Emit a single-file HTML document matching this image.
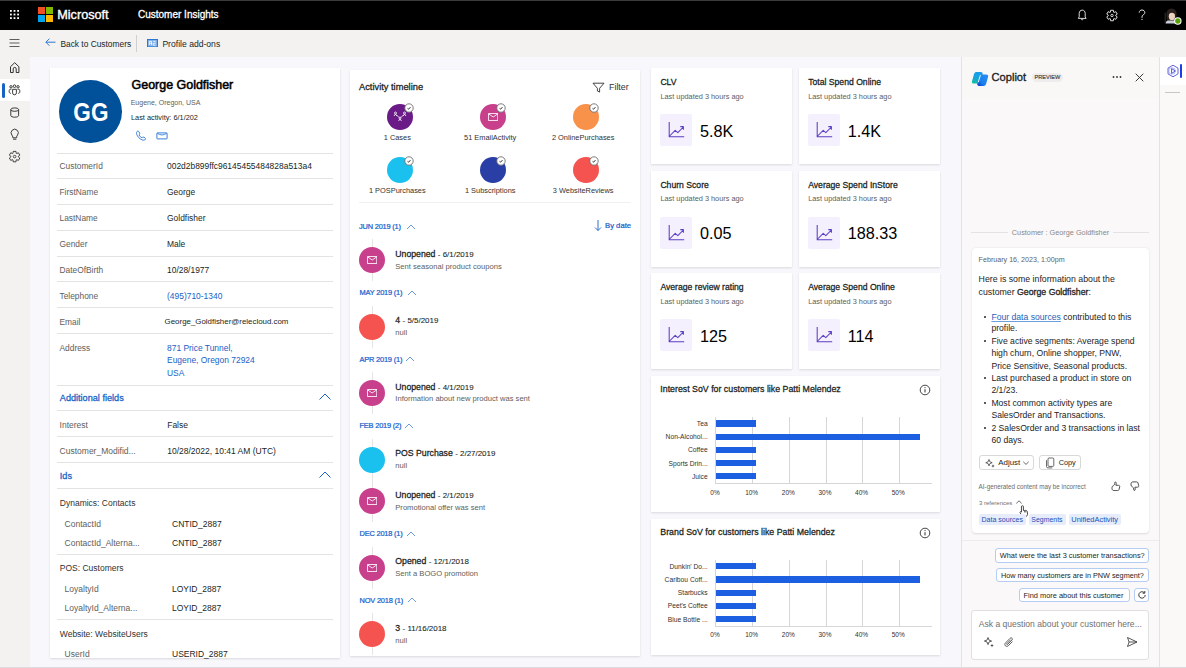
<!DOCTYPE html><html><head><meta charset="utf-8"><style>
html,body{margin:0;padding:0;width:1186px;height:668px;overflow:hidden;background:#f8f7fb;font-family:"Liberation Sans",sans-serif;}
.t{position:absolute;white-space:nowrap;line-height:1;}
.b{position:absolute;box-sizing:border-box;}
</style></head><body>
<div class="b" style="left:0px;top:0px;width:1186px;height:30px;background:#000;"></div>
<div class="b" style="left:0px;top:0px;width:1186px;height:1px;background:#3a3a3a;"></div>
<div class="b" style="left:0px;top:30px;width:30px;height:638px;background:#f4f1f1;"></div>
<div class="b" style="left:30px;top:30px;width:1156px;height:27px;background:#f4f2f1;"></div>
<div class="b" style="left:30px;top:57px;width:931px;height:611px;background:#f8f7fc;"></div>
<div class="b" style="left:961px;top:57px;width:199px;height:611px;background:#faf8f8;border-left:1px solid #e4e2e2;border-right:1px solid #e4e2e2;"></div>
<div class="b" style="left:1160px;top:57px;width:26px;height:611px;background:#fbf8f8;"></div>
<div class="b" style="left:1160px;top:57px;width:26px;height:28px;background:#fff;"></div>
<div class="b" style="left:962px;top:57px;width:197px;height:40.5px;background:#faf7f7;"></div>
<div class="b" style="left:1165px;top:92px;width:15px;height:1px;background:#c8c6c6;"></div>
<div class="b" style="left:0px;top:666.5px;width:1186px;height:1.5px;background:#dddbdd;"></div>
<svg class="b" style="left:0px;top:0px" width="30" height="30" viewBox="0 0 30 30" fill="none"><rect x="10.0" y="10.0" width="1.8" height="1.8" fill="#fff"/><rect x="10.0" y="13.6" width="1.8" height="1.8" fill="#fff"/><rect x="10.0" y="17.2" width="1.8" height="1.8" fill="#fff"/><rect x="13.6" y="10.0" width="1.8" height="1.8" fill="#fff"/><rect x="13.6" y="13.6" width="1.8" height="1.8" fill="#fff"/><rect x="13.6" y="17.2" width="1.8" height="1.8" fill="#fff"/><rect x="17.2" y="10.0" width="1.8" height="1.8" fill="#fff"/><rect x="17.2" y="13.6" width="1.8" height="1.8" fill="#fff"/><rect x="17.2" y="17.2" width="1.8" height="1.8" fill="#fff"/></svg>
<div class="b" style="left:38px;top:7px;width:7px;height:7px;background:#f25022;"></div>
<div class="b" style="left:46px;top:7px;width:7px;height:7px;background:#7fba00;"></div>
<div class="b" style="left:38px;top:15px;width:7px;height:7px;background:#00a4ef;"></div>
<div class="b" style="left:46px;top:15px;width:7px;height:7px;background:#ffb900;"></div>
<div class="t" style="left:57.20px;top:8.64px;font-size:12.7px;font-weight:400;color:#fff;-webkit-text-stroke:0.38px #fff;">Microsoft</div>
<div class="t" style="left:138.00px;top:10.10px;font-size:10.0px;font-weight:400;color:#fff;-webkit-text-stroke:0.30px #fff;">Customer Insights</div>
<svg class="b" style="left:1076px;top:9px" width="12" height="12" viewBox="0 0 12 12" fill="none"><path d="M6.2 1.1c-1.8 0-3 1.4-3 3.3v3.4l-.9 1.6h7.8l-.9-1.6V4.4c0-1.9-1.2-3.3-3-3.3z" stroke="#fff" stroke-width="0.85" stroke-linejoin="round"/><path d="M5.2 10.2c.2.4.5.6 1 .6s.8-.2 1-.6" stroke="#fff" stroke-width="0.85"/></svg>
<svg class="b" style="left:1106px;top:9px" width="12" height="13" viewBox="0 0 12 13" fill="none"><circle cx="6" cy="6.5" r="1.2" stroke="#fff" stroke-width="0.8"/><path d="M9.69 6.79 L11.22 7.90 L9.82 10.32 L8.10 9.55 L7.59 9.84 L7.40 11.72 L4.60 11.72 L4.41 9.84 L3.90 9.55 L2.18 10.32 L0.78 7.90 L2.31 6.79 L2.31 6.21 L0.78 5.10 L2.18 2.68 L3.90 3.45 L4.41 3.16 L4.60 1.28 L7.40 1.28 L7.59 3.16 L8.10 3.45 L9.82 2.68 L11.22 5.10 L9.69 6.21Z" stroke="#fff" stroke-width="0.85" stroke-linejoin="round"/></svg>
<svg class="b" style="left:1137px;top:9px" width="10" height="12" viewBox="0 0 10 12" fill="none"><path d="M2.2 3.6c0-1.6 1.3-2.6 2.8-2.6s2.8 1 2.8 2.5c0 1.2-.7 1.8-1.6 2.4-.8.5-1.2 1-1.2 2v.9" stroke="#fff" stroke-width="0.9"/><circle cx="5" cy="10.3" r="0.6" fill="#fff"/></svg>
<svg class="b" style="left:1160px;top:4px" width="24" height="24" viewBox="0 0 24 24" fill="none"><path d="M5.5 19.5c.5-2.5 2.5-4 6-4.2 3.5.2 5.5 1.7 6 4.2z" fill="#c9ced8"/><path d="M6.5 12c-.5-4.5 1.5-7.5 5-7.5 3.6 0 5.6 3 5 7.5l-.6 4.5H7.2z" fill="#2b211d"/><ellipse cx="11.9" cy="12.2" rx="3.1" ry="3.9" fill="#ecd2bf"/><path d="M8.2 9.5c1.5-1.8 4.5-2.3 6.8-.3" stroke="#2b211d" stroke-width="1.6"/><path d="M5.2 8.5v10.5" stroke="#3a3a3a" stroke-width="0.8"/><circle cx="17.8" cy="17" r="3.2" fill="#57a300" stroke="#fff" stroke-width="1.1"/></svg>
<svg class="b" style="left:45px;top:37.5px" width="11" height="9" viewBox="0 0 11 9" fill="none"><path d="M0.9 4.2h9.6M4.4 0.7L0.9 4.2l3.5 3.5" stroke="#2b78d4" stroke-width="1"/></svg>
<div class="t" style="left:60.40px;top:39.96px;font-size:8.4px;font-weight:400;color:#201f1e;">Back to Customers</div>
<div class="b" style="left:136px;top:35px;width:1px;height:17px;background:#d2d0ce;"></div>
<svg class="b" style="left:146.5px;top:38.8px" width="11" height="8.4" viewBox="0 0 11 8.4" fill="none"><rect x="0.5" y="0.5" width="10" height="7.4" fill="#7fb0ea" stroke="#2b78d4" stroke-width="1"/><path d="M2.3 6.2V2.4h2.2v3.8M2.3 4.3h2.2M6.2 2.4h2.4M8.6 4.3H6.2v1.9h2.4" stroke="#fff" stroke-width="0.8"/></svg>
<div class="t" style="left:162.40px;top:40.16px;font-size:8.6px;font-weight:400;color:#201f1e;">Profile add-ons</div>
<svg class="b" style="left:0px;top:30px" width="30" height="140" viewBox="0 0 30 140" fill="none">
<path d="M9.5 9.5h10M9.5 13h10M9.5 16.5h10" stroke="#605e5c" stroke-width="1"/>
<path d="M10.5 42.5v-5.8l4.2-4 4.2 4v5.8h-2.7v-3.6a1.5 1.5 0 0 0-3 0v3.6z" stroke="#323130" stroke-width="1" stroke-linejoin="round"/>
</svg>
<div class="b" style="left:0px;top:79px;width:30px;height:22px;background:#fff;"></div>
<div class="b" style="left:2px;top:83px;width:2.5px;height:15px;background:#1862c6;border-radius:1.5px;"></div>
<svg class="b" style="left:0px;top:79px" width="30" height="22" viewBox="0 0 30 22" fill="none"><g stroke="#323130" stroke-width="0.95" fill="none"><circle cx="11" cy="7.8" r="1.2"/><circle cx="14.5" cy="7.2" r="1.3"/><circle cx="18" cy="7.8" r="1.2"/><path d="M12.6 10.3h3.8v3.6a1.9 1.9 0 0 1-3.8 0z"/><path d="M11.4 10.3h-1c-.7 0-1.2.5-1.2 1.2v1.3c0 .9.7 1.6 1.7 1.6M17.6 10.3h1c.7 0 1.2.5 1.2 1.2v1.3c0 .9-.7 1.6-1.7 1.6"/></g></svg>
<svg class="b" style="left:0px;top:100px" width="30" height="70" viewBox="0 0 30 70" fill="none">
<ellipse cx="14.7" cy="9.6" rx="3.9" ry="1.7" stroke="#323130" stroke-width="0.95"/><path d="M10.8 9.6v6c0 .9 1.8 1.6 3.9 1.6s3.9-.7 3.9-1.6v-6" stroke="#323130" stroke-width="0.95"/>
<path d="M12.8 37.2c0-.9-.4-1.4-.9-2.1a3.6 3.6 0 1 1 5.6 0c-.5.7-.9 1.2-.9 2.1v.6h-3.8zM13.1 39.2h3.2" stroke="#323130" stroke-width="0.95" stroke-linejoin="round"/>
<circle cx="14.6" cy="56.6" r="1.3" stroke="#323130" stroke-width="0.85"/><path d="M18.29 56.89 L19.82 58.00 L18.42 60.42 L16.70 59.65 L16.19 59.94 L16.00 61.82 L13.20 61.82 L13.01 59.94 L12.50 59.65 L10.78 60.42 L9.38 58.00 L10.91 56.89 L10.91 56.31 L9.38 55.20 L10.78 52.78 L12.50 53.55 L13.01 53.26 L13.20 51.38 L16.00 51.38 L16.19 53.26 L16.70 53.55 L18.42 52.78 L19.82 55.20 L18.29 56.31Z" stroke="#323130" stroke-width="0.9" stroke-linejoin="round"/>
</svg>
<div class="b" style="left:50px;top:68px;width:290px;height:590px;background:#fff;box-shadow:0 0.5px 2px rgba(0,0,0,0.12);"></div>
<div class="b" style="left:59px;top:79.5px;width:63px;height:63px;border-radius:50%;background:#01509a;"></div>
<div class="t" style="left:-109.50px;width:400px;text-align:center;top:98.69px;font-size:26.5px;font-weight:700;color:#fff;transform:scaleX(0.85);letter-spacing:0.4px;">GG</div>
<div class="t" style="left:131.60px;top:78.58px;font-size:12.45px;font-weight:400;color:#000;-webkit-text-stroke:0.37px #000;-webkit-text-stroke:0.55px #000;">George Goldfisher</div>
<div class="t" style="left:130.70px;top:99.22px;font-size:7.0px;font-weight:400;color:#616161;">Eugene, Oregon, USA</div>
<div class="t" style="left:131.00px;top:113.53px;font-size:7.35px;font-weight:400;color:#201f1e;">Last activity: 6/1/202</div>
<svg class="b" style="left:135px;top:130px" width="12" height="12" viewBox="0 0 12 12" fill="none"><path d="M2.6 1.2C1.6 1.6 1.2 2.8 1.7 4.3C2.6 6.8 4.6 8.9 7.1 9.9C8.6 10.5 9.9 10.2 10.4 9.3C10.7 8.8 10.5 8.2 10 7.9L8.8 7.2C8.3 6.9 7.7 7 7.3 7.4L6.9 7.8C5.6 7.2 4.6 6.2 4 4.9L4.4 4.5C4.8 4.1 4.9 3.5 4.6 3L3.9 1.7C3.6 1.2 3.1 1 2.6 1.2Z" stroke="#2b78d4" stroke-width="0.9" stroke-linejoin="round"/></svg>
<svg class="b" style="left:156px;top:132px" width="12" height="8" viewBox="0 0 12 8" fill="none"><rect x="0.9" y="0.9" width="10.2" height="6" rx="0.5" stroke="#2b78d4" stroke-width="0.95"/><path d="M1.3 1.3Q6 4.6 10.7 1.3" stroke="#2b78d4" stroke-width="0.85"/></svg>
<div class="b" style="left:57px;top:152.5px;width:276px;height:1px;background:#e5e3e2;"></div>
<div class="b" style="left:57px;top:178.2px;width:276px;height:1px;background:#e5e3e2;"></div>
<div class="b" style="left:57px;top:204px;width:276px;height:1px;background:#e5e3e2;"></div>
<div class="b" style="left:57px;top:230px;width:276px;height:1px;background:#e5e3e2;"></div>
<div class="b" style="left:57px;top:255.6px;width:276px;height:1px;background:#e5e3e2;"></div>
<div class="b" style="left:57px;top:281.4px;width:276px;height:1px;background:#e5e3e2;"></div>
<div class="b" style="left:57px;top:307.4px;width:276px;height:1px;background:#e5e3e2;"></div>
<div class="b" style="left:57px;top:333px;width:276px;height:1px;background:#e5e3e2;"></div>
<div class="b" style="left:57px;top:384.5px;width:276px;height:1px;background:#e5e3e2;"></div>
<div class="b" style="left:57px;top:410.2px;width:276px;height:1px;background:#e5e3e2;"></div>
<div class="b" style="left:57px;top:436px;width:276px;height:1px;background:#e5e3e2;"></div>
<div class="b" style="left:57px;top:462px;width:276px;height:1px;background:#e5e3e2;"></div>
<div class="b" style="left:57px;top:487.8px;width:276px;height:1px;background:#e5e3e2;"></div>
<div class="b" style="left:57px;top:553.8px;width:276px;height:1px;background:#e5e3e2;"></div>
<div class="b" style="left:57px;top:618.5px;width:276px;height:1px;background:#e5e3e2;"></div>
<div class="t" style="left:59.50px;top:162.26px;font-size:8.4px;font-weight:400;color:#605e5c;">CustomerId</div>
<div class="t" style="left:167.00px;top:162.24px;font-size:8.45px;font-weight:400;color:#201f1e;">002d2b899ffc96145455484828a513a4</div>
<div class="t" style="left:59.50px;top:187.96px;font-size:8.4px;font-weight:400;color:#605e5c;">FirstName</div>
<div class="t" style="left:167.00px;top:187.94px;font-size:8.45px;font-weight:400;color:#201f1e;">George</div>
<div class="t" style="left:59.50px;top:213.96px;font-size:8.4px;font-weight:400;color:#605e5c;">LastName</div>
<div class="t" style="left:167.00px;top:213.94px;font-size:8.45px;font-weight:400;color:#201f1e;">Goldfisher</div>
<div class="t" style="left:59.50px;top:239.96px;font-size:8.4px;font-weight:400;color:#605e5c;">Gender</div>
<div class="t" style="left:167.00px;top:239.94px;font-size:8.45px;font-weight:400;color:#201f1e;">Male</div>
<div class="t" style="left:59.50px;top:265.96px;font-size:8.4px;font-weight:400;color:#605e5c;">DateOfBirth</div>
<div class="t" style="left:167.00px;top:265.94px;font-size:8.45px;font-weight:400;color:#201f1e;">10/28/1977</div>
<div class="t" style="left:59.50px;top:291.96px;font-size:8.4px;font-weight:400;color:#605e5c;">Telephone</div>
<div class="t" style="left:167.00px;top:291.94px;font-size:8.45px;font-weight:400;color:#1862c6;">(495)710-1340</div>
<div class="t" style="left:59.50px;top:317.96px;font-size:8.4px;font-weight:400;color:#605e5c;">Email</div>
<div class="t" style="left:164.60px;top:318.23px;font-size:7.9px;font-weight:400;color:#201f1e;">George_Goldfisher@relecloud.com</div>
<div class="t" style="left:59.50px;top:343.96px;font-size:8.4px;font-weight:400;color:#605e5c;">Address</div>
<div class="t" style="left:167.00px;top:343.74px;font-size:8.45px;font-weight:400;color:#1862c6;">871 Price Tunnel,</div>
<div class="t" style="left:167.00px;top:356.14px;font-size:8.45px;font-weight:400;color:#1862c6;">Eugene, Oregon 72924</div>
<div class="t" style="left:167.00px;top:368.54px;font-size:8.45px;font-weight:400;color:#1862c6;">USA</div>
<div class="t" style="left:59.80px;top:393.76px;font-size:9.15px;font-weight:400;color:#1862c6;-webkit-text-stroke:0.27px #1862c6;">Additional fields</div>
<svg class="b" style="left:318px;top:392px" width="14" height="10" viewBox="0 0 14 10" fill="none"><path d="M1.5 7.5L7 2l5.5 5.5" stroke="#1862c6" stroke-width="1"/></svg>
<div class="t" style="left:59.60px;top:420.91px;font-size:8.5px;font-weight:400;color:#605e5c;">Interest</div>
<div class="t" style="left:167.20px;top:420.91px;font-size:8.5px;font-weight:400;color:#201f1e;">False</div>
<div class="t" style="left:59.60px;top:446.91px;font-size:8.5px;font-weight:400;color:#605e5c;">Customer_Modifid...</div>
<div class="t" style="left:167.20px;top:446.91px;font-size:8.5px;font-weight:400;color:#201f1e;">10/28/2022, 10:41 AM (UTC)</div>
<div class="t" style="left:59.80px;top:471.56px;font-size:9.15px;font-weight:400;color:#1862c6;-webkit-text-stroke:0.27px #1862c6;">Ids</div>
<svg class="b" style="left:318px;top:470px" width="14" height="10" viewBox="0 0 14 10" fill="none"><path d="M1.5 7.5L7 2l5.5 5.5" stroke="#1862c6" stroke-width="1"/></svg>
<div class="t" style="left:59.80px;top:498.91px;font-size:8.5px;font-weight:400;color:#323130;">Dynamics: Contacts</div>
<div class="t" style="left:64.60px;top:519.61px;font-size:8.5px;font-weight:400;color:#605e5c;">ContactId</div>
<div class="t" style="left:172.00px;top:519.61px;font-size:8.5px;font-weight:400;color:#201f1e;">CNTID_2887</div>
<div class="t" style="left:64.60px;top:538.61px;font-size:8.5px;font-weight:400;color:#605e5c;">ContactId_Alterna...</div>
<div class="t" style="left:172.00px;top:538.61px;font-size:8.5px;font-weight:400;color:#201f1e;">CNTID_2887</div>
<div class="t" style="left:59.80px;top:563.91px;font-size:8.5px;font-weight:400;color:#323130;">POS: Customers</div>
<div class="t" style="left:64.60px;top:585.21px;font-size:8.5px;font-weight:400;color:#605e5c;">LoyaltyId</div>
<div class="t" style="left:172.00px;top:585.21px;font-size:8.5px;font-weight:400;color:#201f1e;">LOYID_2887</div>
<div class="t" style="left:64.60px;top:603.71px;font-size:8.5px;font-weight:400;color:#605e5c;">LoyaltyId_Alterna...</div>
<div class="t" style="left:172.00px;top:603.71px;font-size:8.5px;font-weight:400;color:#201f1e;">LOYID_2887</div>
<div class="t" style="left:59.80px;top:629.61px;font-size:8.5px;font-weight:400;color:#323130;">Website: WebsiteUsers</div>
<div class="t" style="left:64.60px;top:650.31px;font-size:8.5px;font-weight:400;color:#605e5c;">UserId</div>
<div class="t" style="left:172.00px;top:650.31px;font-size:8.5px;font-weight:400;color:#201f1e;">USERID_2887</div>
<div class="b" style="left:350px;top:69.5px;width:290px;height:586px;background:#fff;box-shadow:0 0.5px 2px rgba(0,0,0,0.12);"></div>
<div class="t" style="left:359.00px;top:82.68px;font-size:9.3px;font-weight:400;color:#201f1e;-webkit-text-stroke:0.28px #201f1e;">Activity timeline</div>
<svg class="b" style="left:592px;top:82px" width="13" height="11" viewBox="0 0 13 11" fill="none"><path d="M1 1.2h11L7.6 6.3v3.8L5.4 9V6.3z" stroke="#323130" stroke-width="0.9" stroke-linejoin="round"/></svg>
<div class="t" style="left:609.00px;top:83.09px;font-size:8.9px;font-weight:400;color:#323130;">Filter</div>
<div class="b" style="left:387.40px;top:104.10px;width:25.8px;height:25.8px;border-radius:50%;background:#6b1b87;"></div>
<svg class="b" style="left:403.5px;top:103.4px" width="10" height="10" viewBox="0 0 10 10" fill="none"><circle cx="5" cy="5" r="4.2" fill="#fff" stroke="#6e6e6e" stroke-width="0.9"/><path d="M3.6 5.4l.9.8 1.9-2" stroke="#201f1e" stroke-width="1"/></svg>
<div class="t" style="left:197.30px;width:400px;text-align:center;top:134.20px;font-size:7.4px;font-weight:400;color:#323130;">1 Cases</div>
<div class="b" style="left:480.30px;top:104.10px;width:25.8px;height:25.8px;border-radius:50%;background:#c83f8c;"></div>
<svg class="b" style="left:496.4px;top:103.4px" width="10" height="10" viewBox="0 0 10 10" fill="none"><circle cx="5" cy="5" r="4.2" fill="#fff" stroke="#6e6e6e" stroke-width="0.9"/><path d="M3.6 5.4l.9.8 1.9-2" stroke="#201f1e" stroke-width="1"/></svg>
<div class="t" style="left:290.20px;width:400px;text-align:center;top:134.20px;font-size:7.4px;font-weight:400;color:#323130;">51 EmailActivity</div>
<div class="b" style="left:573.30px;top:104.10px;width:25.8px;height:25.8px;border-radius:50%;background:#f8914a;"></div>
<svg class="b" style="left:589.4000000000001px;top:103.4px" width="10" height="10" viewBox="0 0 10 10" fill="none"><circle cx="5" cy="5" r="4.2" fill="#fff" stroke="#6e6e6e" stroke-width="0.9"/><path d="M3.6 5.4l.9.8 1.9-2" stroke="#201f1e" stroke-width="1"/></svg>
<div class="t" style="left:383.20px;width:400px;text-align:center;top:134.20px;font-size:7.4px;font-weight:400;color:#323130;">2 OnlinePurchases</div>
<div class="b" style="left:387.40px;top:156.80px;width:25.8px;height:25.8px;border-radius:50%;background:#1ac0ee;"></div>
<svg class="b" style="left:403.5px;top:156.1px" width="10" height="10" viewBox="0 0 10 10" fill="none"><circle cx="5" cy="5" r="4.2" fill="#fff" stroke="#6e6e6e" stroke-width="0.9"/><path d="M3.6 5.4l.9.8 1.9-2" stroke="#201f1e" stroke-width="1"/></svg>
<div class="t" style="left:197.30px;width:400px;text-align:center;top:186.90px;font-size:7.4px;font-weight:400;color:#323130;">1 POSPurchases</div>
<div class="b" style="left:480.30px;top:156.80px;width:25.8px;height:25.8px;border-radius:50%;background:#2a3fa6;"></div>
<svg class="b" style="left:496.4px;top:156.1px" width="10" height="10" viewBox="0 0 10 10" fill="none"><circle cx="5" cy="5" r="4.2" fill="#fff" stroke="#6e6e6e" stroke-width="0.9"/><path d="M3.6 5.4l.9.8 1.9-2" stroke="#201f1e" stroke-width="1"/></svg>
<div class="t" style="left:290.20px;width:400px;text-align:center;top:186.90px;font-size:7.4px;font-weight:400;color:#323130;">1 Subscriptions</div>
<div class="b" style="left:573.30px;top:156.80px;width:25.8px;height:25.8px;border-radius:50%;background:#f4534f;"></div>
<svg class="b" style="left:589.4000000000001px;top:156.1px" width="10" height="10" viewBox="0 0 10 10" fill="none"><circle cx="5" cy="5" r="4.2" fill="#fff" stroke="#6e6e6e" stroke-width="0.9"/><path d="M3.6 5.4l.9.8 1.9-2" stroke="#201f1e" stroke-width="1"/></svg>
<div class="t" style="left:383.20px;width:400px;text-align:center;top:186.90px;font-size:7.4px;font-weight:400;color:#323130;">3 WebsiteReviews</div>
<svg class="b" style="left:392px;top:110px" width="16" height="14" viewBox="0 0 16 14" fill="none"><g stroke="#fff" stroke-width="0.8"><circle cx="3.5" cy="3" r="1"/><circle cx="12.5" cy="3" r="1"/><circle cx="8" cy="8" r="1"/><path d="M2 6l1.5-2 1.5 2M11 6l1.5-2 1.5 2M6.5 11l1.5-2 1.5 2M4.5 5l2.5 2.5M11.5 5L9 7.5"/></g></svg>
<svg class="b" style="left:487.5px;top:113px" width="10.4" height="8" viewBox="0 0 10.4 8" fill="none"><rect x="0.6" y="0.6" width="9.2" height="6.8" stroke="#fff" stroke-width="0.85"/><path d="M0.8 1l4.4 3 4.4-3" stroke="#fff" stroke-width="0.85"/></svg>
<div class="b" style="left:359px;top:202px;width:272px;height:1px;background:#f3f1f0;"></div>
<div class="t" style="left:359.00px;top:222.98px;font-size:7.45px;font-weight:400;color:#1860cc;-webkit-text-stroke:0.22px #1860cc;letter-spacing:-0.2px;">JUN 2019 (1)</div>
<svg class="b" style="left:405.5px;top:223.6px" width="10" height="6" viewBox="0 0 10 6" fill="none"><path d="M1 5l4-4 4 4" stroke="#5b8fd6" stroke-width="0.9"/></svg>
<svg class="b" style="left:594px;top:219px" width="8" height="13" viewBox="0 0 8 13" fill="none"><path d="M4 1v10.5M1 8.5l3 3 3-3" stroke="#1862c6" stroke-width="0.9"/></svg>
<div class="t" style="left:605.00px;top:222.14px;font-size:7.7px;font-weight:400;color:#1860cc;-webkit-text-stroke:0.23px #1860cc;">By date</div>
<div class="b" style="left:372px;top:239.2px;width:0.8px;height:42px;background:#e6e4e2;"></div>
<div class="b" style="left:359.10px;top:247.20px;width:26px;height:26px;border-radius:50%;background:#c83f8c;"></div>
<svg class="b" style="left:366.90000000000003px;top:256.2px" width="10.4" height="8" viewBox="0 0 10.4 8" fill="none"><rect x="0.6" y="0.6" width="9.2" height="6.8" stroke="#fff" stroke-width="0.85"/><path d="M0.8 1l4.4 3 4.4-3" stroke="#fff" stroke-width="0.85"/></svg>
<div class="t" style="left:395.30px;top:250.00px;font-size:8.7px;font-weight:400;color:#201f1e;-webkit-text-stroke:0.26px #201f1e;">Unopened <span style="font-size:7.95px;-webkit-text-stroke:0.08px #201f1e">- 6/1/2019</span></div>
<div class="t" style="left:395.30px;top:262.60px;font-size:7.6px;font-weight:400;color:#605e5c;">Sent seasonal product coupons</div>
<div class="t" style="left:359.50px;top:289.08px;font-size:7.45px;font-weight:400;color:#1860cc;-webkit-text-stroke:0.22px #1860cc;letter-spacing:-0.2px;">MAY 2019 (1)</div>
<svg class="b" style="left:407.0px;top:289.7px" width="10" height="6" viewBox="0 0 10 6" fill="none"><path d="M1 5l4-4 4 4" stroke="#5b8fd6" stroke-width="0.9"/></svg>
<div class="b" style="left:372px;top:305.5px;width:0.8px;height:42px;background:#e6e4e2;"></div>
<div class="b" style="left:359.10px;top:313.50px;width:26px;height:26px;border-radius:50%;background:#f4534f;"></div>
<div class="t" style="left:395.30px;top:316.30px;font-size:8.7px;font-weight:400;color:#201f1e;-webkit-text-stroke:0.26px #201f1e;">4 <span style="font-size:7.95px;-webkit-text-stroke:0.08px #201f1e">- 5/5/2019</span></div>
<div class="t" style="left:395.30px;top:328.90px;font-size:7.6px;font-weight:400;color:#605e5c;">null</div>
<div class="t" style="left:359.50px;top:355.58px;font-size:7.45px;font-weight:400;color:#1860cc;-webkit-text-stroke:0.22px #1860cc;letter-spacing:-0.2px;">APR 2019 (1)</div>
<svg class="b" style="left:405.0px;top:356.2px" width="10" height="6" viewBox="0 0 10 6" fill="none"><path d="M1 5l4-4 4 4" stroke="#5b8fd6" stroke-width="0.9"/></svg>
<div class="b" style="left:372px;top:372px;width:0.8px;height:42px;background:#e6e4e2;"></div>
<div class="b" style="left:359.10px;top:380.00px;width:26px;height:26px;border-radius:50%;background:#c83f8c;"></div>
<svg class="b" style="left:366.90000000000003px;top:389px" width="10.4" height="8" viewBox="0 0 10.4 8" fill="none"><rect x="0.6" y="0.6" width="9.2" height="6.8" stroke="#fff" stroke-width="0.85"/><path d="M0.8 1l4.4 3 4.4-3" stroke="#fff" stroke-width="0.85"/></svg>
<div class="t" style="left:395.30px;top:382.80px;font-size:8.7px;font-weight:400;color:#201f1e;-webkit-text-stroke:0.26px #201f1e;">Unopened <span style="font-size:7.95px;-webkit-text-stroke:0.08px #201f1e">- 4/1/2019</span></div>
<div class="t" style="left:395.30px;top:395.40px;font-size:7.6px;font-weight:400;color:#605e5c;">Information about new product was sent</div>
<div class="t" style="left:359.50px;top:422.48px;font-size:7.45px;font-weight:400;color:#1860cc;-webkit-text-stroke:0.22px #1860cc;letter-spacing:-0.2px;">FEB 2019 (2)</div>
<svg class="b" style="left:404.0px;top:423.1px" width="10" height="6" viewBox="0 0 10 6" fill="none"><path d="M1 5l4-4 4 4" stroke="#5b8fd6" stroke-width="0.9"/></svg>
<div class="b" style="left:372px;top:438.6px;width:0.8px;height:42px;background:#e6e4e2;"></div>
<div class="b" style="left:359.10px;top:446.60px;width:26px;height:26px;border-radius:50%;background:#1ac0ee;"></div>
<div class="t" style="left:395.30px;top:449.40px;font-size:8.7px;font-weight:400;color:#201f1e;-webkit-text-stroke:0.26px #201f1e;">POS Purchase <span style="font-size:7.95px;-webkit-text-stroke:0.08px #201f1e">- 2/27/2019</span></div>
<div class="t" style="left:395.30px;top:462.00px;font-size:7.6px;font-weight:400;color:#605e5c;">null</div>
<div class="b" style="left:372px;top:480.2px;width:0.8px;height:42px;background:#e6e4e2;"></div>
<div class="b" style="left:359.10px;top:488.20px;width:26px;height:26px;border-radius:50%;background:#c83f8c;"></div>
<svg class="b" style="left:366.90000000000003px;top:497.2px" width="10.4" height="8" viewBox="0 0 10.4 8" fill="none"><rect x="0.6" y="0.6" width="9.2" height="6.8" stroke="#fff" stroke-width="0.85"/><path d="M0.8 1l4.4 3 4.4-3" stroke="#fff" stroke-width="0.85"/></svg>
<div class="t" style="left:395.30px;top:491.00px;font-size:8.7px;font-weight:400;color:#201f1e;-webkit-text-stroke:0.26px #201f1e;">Unopened <span style="font-size:7.95px;-webkit-text-stroke:0.08px #201f1e">- 2/1/2019</span></div>
<div class="t" style="left:395.30px;top:503.60px;font-size:7.6px;font-weight:400;color:#605e5c;">Promotional offer was sent</div>
<div class="t" style="left:359.50px;top:530.48px;font-size:7.45px;font-weight:400;color:#1860cc;-webkit-text-stroke:0.22px #1860cc;letter-spacing:-0.2px;">DEC 2018 (1)</div>
<svg class="b" style="left:406.0px;top:531.0999999999999px" width="10" height="6" viewBox="0 0 10 6" fill="none"><path d="M1 5l4-4 4 4" stroke="#5b8fd6" stroke-width="0.9"/></svg>
<div class="b" style="left:372px;top:546.5px;width:0.8px;height:42px;background:#e6e4e2;"></div>
<div class="b" style="left:359.10px;top:554.50px;width:26px;height:26px;border-radius:50%;background:#c83f8c;"></div>
<svg class="b" style="left:366.90000000000003px;top:563.5px" width="10.4" height="8" viewBox="0 0 10.4 8" fill="none"><rect x="0.6" y="0.6" width="9.2" height="6.8" stroke="#fff" stroke-width="0.85"/><path d="M0.8 1l4.4 3 4.4-3" stroke="#fff" stroke-width="0.85"/></svg>
<div class="t" style="left:395.30px;top:557.30px;font-size:8.7px;font-weight:400;color:#201f1e;-webkit-text-stroke:0.26px #201f1e;">Opened <span style="font-size:7.95px;-webkit-text-stroke:0.08px #201f1e">- 12/1/2018</span></div>
<div class="t" style="left:395.30px;top:569.90px;font-size:7.6px;font-weight:400;color:#605e5c;">Sent a BOGO promotion</div>
<div class="t" style="left:359.50px;top:596.78px;font-size:7.45px;font-weight:400;color:#1860cc;-webkit-text-stroke:0.22px #1860cc;letter-spacing:-0.2px;">NOV 2018 (1)</div>
<svg class="b" style="left:407.0px;top:597.4px" width="10" height="6" viewBox="0 0 10 6" fill="none"><path d="M1 5l4-4 4 4" stroke="#5b8fd6" stroke-width="0.9"/></svg>
<div class="b" style="left:372px;top:613.1px;width:0.8px;height:42px;background:#e6e4e2;"></div>
<div class="b" style="left:359.10px;top:621.10px;width:26px;height:26px;border-radius:50%;background:#f4534f;"></div>
<div class="t" style="left:395.30px;top:623.90px;font-size:8.7px;font-weight:400;color:#201f1e;-webkit-text-stroke:0.26px #201f1e;">3 <span style="font-size:7.95px;-webkit-text-stroke:0.08px #201f1e">- 11/16/2018</span></div>
<div class="t" style="left:395.30px;top:636.50px;font-size:7.6px;font-weight:400;color:#605e5c;">null</div>
<div class="b" style="left:651px;top:68px;width:141.4px;height:96px;background:#fff;box-shadow:0 0.5px 2px rgba(0,0,0,0.12);"></div>
<div class="t" style="left:660.40px;top:78.43px;font-size:8.65px;font-weight:400;color:#201f1e;-webkit-text-stroke:0.26px #201f1e;">CLV</div>
<div class="t" style="left:660.40px;top:92.73px;font-size:7.35px;font-weight:400;color:#605e5c;">Last updated 3 hours ago</div>
<div class="b" style="left:659.9px;top:114px;width:32px;height:32px;background:#f4f0fd;border-radius:2px;"></div>
<svg class="b" style="left:659.9px;top:114px" width="32" height="32" viewBox="0 0 32 32" fill="none"><path d="M9.2 8v14.7h15M9.6 22l5.6-5.6 2.6 2.2 5.6-5.6M20.3 12.6h3.1v3.1" stroke="#5b3fc4" stroke-width="1.05" stroke-linejoin="round"/></svg>
<div class="t" style="left:700.00px;top:122.55px;font-size:16.2px;font-weight:400;color:#000;">5.8K</div>
<div class="b" style="left:798.8px;top:68px;width:141.4px;height:96px;background:#fff;box-shadow:0 0.5px 2px rgba(0,0,0,0.12);"></div>
<div class="t" style="left:808.20px;top:78.43px;font-size:8.65px;font-weight:400;color:#201f1e;-webkit-text-stroke:0.26px #201f1e;">Total Spend Online</div>
<div class="t" style="left:808.20px;top:92.73px;font-size:7.35px;font-weight:400;color:#605e5c;">Last updated 3 hours ago</div>
<div class="b" style="left:807.6999999999999px;top:114px;width:32px;height:32px;background:#f4f0fd;border-radius:2px;"></div>
<svg class="b" style="left:807.6999999999999px;top:114px" width="32" height="32" viewBox="0 0 32 32" fill="none"><path d="M9.2 8v14.7h15M9.6 22l5.6-5.6 2.6 2.2 5.6-5.6M20.3 12.6h3.1v3.1" stroke="#5b3fc4" stroke-width="1.05" stroke-linejoin="round"/></svg>
<div class="t" style="left:847.80px;top:122.55px;font-size:16.2px;font-weight:400;color:#000;">1.4K</div>
<div class="b" style="left:651px;top:170.5px;width:141.4px;height:96px;background:#fff;box-shadow:0 0.5px 2px rgba(0,0,0,0.12);"></div>
<div class="t" style="left:660.40px;top:180.93px;font-size:8.65px;font-weight:400;color:#201f1e;-webkit-text-stroke:0.26px #201f1e;">Churn Score</div>
<div class="t" style="left:660.40px;top:195.23px;font-size:7.35px;font-weight:400;color:#605e5c;">Last updated 3 hours ago</div>
<div class="b" style="left:659.9px;top:216.5px;width:32px;height:32px;background:#f4f0fd;border-radius:2px;"></div>
<svg class="b" style="left:659.9px;top:216.5px" width="32" height="32" viewBox="0 0 32 32" fill="none"><path d="M9.2 8v14.7h15M9.6 22l5.6-5.6 2.6 2.2 5.6-5.6M20.3 12.6h3.1v3.1" stroke="#5b3fc4" stroke-width="1.05" stroke-linejoin="round"/></svg>
<div class="t" style="left:700.00px;top:225.05px;font-size:16.2px;font-weight:400;color:#000;">0.05</div>
<div class="b" style="left:798.8px;top:170.5px;width:141.4px;height:96px;background:#fff;box-shadow:0 0.5px 2px rgba(0,0,0,0.12);"></div>
<div class="t" style="left:808.20px;top:180.93px;font-size:8.65px;font-weight:400;color:#201f1e;-webkit-text-stroke:0.26px #201f1e;">Average Spend InStore</div>
<div class="t" style="left:808.20px;top:195.23px;font-size:7.35px;font-weight:400;color:#605e5c;">Last updated 3 hours ago</div>
<div class="b" style="left:807.6999999999999px;top:216.5px;width:32px;height:32px;background:#f4f0fd;border-radius:2px;"></div>
<svg class="b" style="left:807.6999999999999px;top:216.5px" width="32" height="32" viewBox="0 0 32 32" fill="none"><path d="M9.2 8v14.7h15M9.6 22l5.6-5.6 2.6 2.2 5.6-5.6M20.3 12.6h3.1v3.1" stroke="#5b3fc4" stroke-width="1.05" stroke-linejoin="round"/></svg>
<div class="t" style="left:847.80px;top:225.05px;font-size:16.2px;font-weight:400;color:#000;">188.33</div>
<div class="b" style="left:651px;top:273px;width:141.4px;height:96px;background:#fff;box-shadow:0 0.5px 2px rgba(0,0,0,0.12);"></div>
<div class="t" style="left:660.40px;top:283.43px;font-size:8.65px;font-weight:400;color:#201f1e;-webkit-text-stroke:0.26px #201f1e;">Average review rating</div>
<div class="t" style="left:660.40px;top:297.73px;font-size:7.35px;font-weight:400;color:#605e5c;">Last updated 3 hours ago</div>
<div class="b" style="left:659.9px;top:319px;width:32px;height:32px;background:#f4f0fd;border-radius:2px;"></div>
<svg class="b" style="left:659.9px;top:319px" width="32" height="32" viewBox="0 0 32 32" fill="none"><path d="M9.2 8v14.7h15M9.6 22l5.6-5.6 2.6 2.2 5.6-5.6M20.3 12.6h3.1v3.1" stroke="#5b3fc4" stroke-width="1.05" stroke-linejoin="round"/></svg>
<div class="t" style="left:700.00px;top:327.55px;font-size:16.2px;font-weight:400;color:#000;">125</div>
<div class="b" style="left:798.8px;top:273px;width:141.4px;height:96px;background:#fff;box-shadow:0 0.5px 2px rgba(0,0,0,0.12);"></div>
<div class="t" style="left:808.20px;top:283.43px;font-size:8.65px;font-weight:400;color:#201f1e;-webkit-text-stroke:0.26px #201f1e;">Average Spend Online</div>
<div class="t" style="left:808.20px;top:297.73px;font-size:7.35px;font-weight:400;color:#605e5c;">Last updated 3 hours ago</div>
<div class="b" style="left:807.6999999999999px;top:319px;width:32px;height:32px;background:#f4f0fd;border-radius:2px;"></div>
<svg class="b" style="left:807.6999999999999px;top:319px" width="32" height="32" viewBox="0 0 32 32" fill="none"><path d="M9.2 8v14.7h15M9.6 22l5.6-5.6 2.6 2.2 5.6-5.6M20.3 12.6h3.1v3.1" stroke="#5b3fc4" stroke-width="1.05" stroke-linejoin="round"/></svg>
<div class="t" style="left:847.80px;top:327.55px;font-size:16.2px;font-weight:400;color:#000;">114</div>
<div class="b" style="left:651px;top:375.7px;width:289.4px;height:136px;background:#fff;box-shadow:0 0.5px 2px rgba(0,0,0,0.12);"></div>
<div class="t" style="left:660.30px;top:385.25px;font-size:8.8px;font-weight:400;color:#201f1e;-webkit-text-stroke:0.26px #201f1e;">Interest SoV for customers like Patti Melendez</div>
<svg class="b" style="left:918.5px;top:383.9px" width="12" height="12" viewBox="0 0 12 12" fill="none"><circle cx="6" cy="6" r="4.8" stroke="#323130" stroke-width="0.9"/><path d="M6 5.2v3.2" stroke="#323130" stroke-width="1"/><circle cx="6" cy="3.6" r="0.6" fill="#323130"/></svg>
<div class="b" style="left:752.4499999999999px;top:416.9px;width:0.8px;height:66.39999999999998px;background:#d6d6d6;"></div>
<div class="b" style="left:789.0999999999999px;top:416.9px;width:0.8px;height:66.39999999999998px;background:#d6d6d6;"></div>
<div class="b" style="left:825.75px;top:416.9px;width:0.8px;height:66.39999999999998px;background:#d6d6d6;"></div>
<div class="b" style="left:862.4px;top:416.9px;width:0.8px;height:66.39999999999998px;background:#d6d6d6;"></div>
<div class="b" style="left:899.05px;top:416.9px;width:0.8px;height:66.39999999999998px;background:#d6d6d6;"></div>
<div class="b" style="left:715.3px;top:416.9px;width:0.8px;height:66.39999999999998px;background:#d6d6d6;"></div>
<div class="b" style="left:715.3px;top:483.29999999999995px;width:216.5px;height:0.8px;background:#d6d6d6;"></div>
<div class="b" style="left:715.9px;top:420.4px;width:40px;height:6.3px;background:#1c5fe0;"></div>
<div class="t" style="right:478.40px;top:421.18px;font-size:6.7px;font-weight:400;color:#323130;">Tea</div>
<div class="b" style="left:715.9px;top:433.54999999999995px;width:204.3px;height:6.3px;background:#1c5fe0;"></div>
<div class="t" style="right:478.40px;top:434.33px;font-size:6.7px;font-weight:400;color:#323130;">Non-Alcohol...</div>
<div class="b" style="left:715.9px;top:446.7px;width:40px;height:6.3px;background:#1c5fe0;"></div>
<div class="t" style="right:478.40px;top:447.48px;font-size:6.7px;font-weight:400;color:#323130;">Coffee</div>
<div class="b" style="left:715.9px;top:459.84999999999997px;width:40px;height:6.3px;background:#1c5fe0;"></div>
<div class="t" style="right:478.40px;top:460.63px;font-size:6.7px;font-weight:400;color:#323130;">Sports Drin...</div>
<div class="b" style="left:715.9px;top:473.0px;width:40px;height:6.3px;background:#1c5fe0;"></div>
<div class="t" style="right:478.40px;top:473.78px;font-size:6.7px;font-weight:400;color:#323130;">Juice</div>
<div class="t" style="left:515.00px;width:400px;text-align:center;top:489.59px;font-size:6.5px;font-weight:400;color:#323130;">0%</div>
<div class="t" style="left:551.65px;width:400px;text-align:center;top:489.59px;font-size:6.5px;font-weight:400;color:#323130;">10%</div>
<div class="t" style="left:588.30px;width:400px;text-align:center;top:489.59px;font-size:6.5px;font-weight:400;color:#323130;">20%</div>
<div class="t" style="left:624.95px;width:400px;text-align:center;top:489.59px;font-size:6.5px;font-weight:400;color:#323130;">30%</div>
<div class="t" style="left:661.60px;width:400px;text-align:center;top:489.59px;font-size:6.5px;font-weight:400;color:#323130;">40%</div>
<div class="t" style="left:698.25px;width:400px;text-align:center;top:489.59px;font-size:6.5px;font-weight:400;color:#323130;">50%</div>
<div class="b" style="left:651px;top:518.5px;width:289.4px;height:136px;background:#fff;box-shadow:0 0.5px 2px rgba(0,0,0,0.12);"></div>
<div class="t" style="left:660.30px;top:528.05px;font-size:8.8px;font-weight:400;color:#201f1e;-webkit-text-stroke:0.26px #201f1e;">Brand SoV for customers like Patti Melendez</div>
<svg class="b" style="left:918.5px;top:526.7px" width="12" height="12" viewBox="0 0 12 12" fill="none"><circle cx="6" cy="6" r="4.8" stroke="#323130" stroke-width="0.9"/><path d="M6 5.2v3.2" stroke="#323130" stroke-width="1"/><circle cx="6" cy="3.6" r="0.6" fill="#323130"/></svg>
<div class="b" style="left:752.4499999999999px;top:559.7px;width:0.8px;height:66.39999999999998px;background:#d6d6d6;"></div>
<div class="b" style="left:789.0999999999999px;top:559.7px;width:0.8px;height:66.39999999999998px;background:#d6d6d6;"></div>
<div class="b" style="left:825.75px;top:559.7px;width:0.8px;height:66.39999999999998px;background:#d6d6d6;"></div>
<div class="b" style="left:862.4px;top:559.7px;width:0.8px;height:66.39999999999998px;background:#d6d6d6;"></div>
<div class="b" style="left:899.05px;top:559.7px;width:0.8px;height:66.39999999999998px;background:#d6d6d6;"></div>
<div class="b" style="left:715.3px;top:559.7px;width:0.8px;height:66.39999999999998px;background:#d6d6d6;"></div>
<div class="b" style="left:715.3px;top:626.1px;width:216.5px;height:0.8px;background:#d6d6d6;"></div>
<div class="b" style="left:715.9px;top:563.1999999999999px;width:40px;height:6.3px;background:#1c5fe0;"></div>
<div class="t" style="right:478.40px;top:563.98px;font-size:6.7px;font-weight:400;color:#323130;">Dunkin' Do...</div>
<div class="b" style="left:715.9px;top:576.3499999999999px;width:204.3px;height:6.3px;background:#1c5fe0;"></div>
<div class="t" style="right:478.40px;top:577.13px;font-size:6.7px;font-weight:400;color:#323130;">Caribou Coff...</div>
<div class="b" style="left:715.9px;top:589.4999999999999px;width:40px;height:6.3px;background:#1c5fe0;"></div>
<div class="t" style="right:478.40px;top:590.28px;font-size:6.7px;font-weight:400;color:#323130;">Starbucks</div>
<div class="b" style="left:715.9px;top:602.65px;width:40px;height:6.3px;background:#1c5fe0;"></div>
<div class="t" style="right:478.40px;top:603.43px;font-size:6.7px;font-weight:400;color:#323130;">Peet's Coffee</div>
<div class="b" style="left:715.9px;top:615.8px;width:40px;height:6.3px;background:#1c5fe0;"></div>
<div class="t" style="right:478.40px;top:616.58px;font-size:6.7px;font-weight:400;color:#323130;">Blue Bottle ...</div>
<div class="t" style="left:515.00px;width:400px;text-align:center;top:632.39px;font-size:6.5px;font-weight:400;color:#323130;">0%</div>
<div class="t" style="left:551.65px;width:400px;text-align:center;top:632.39px;font-size:6.5px;font-weight:400;color:#323130;">10%</div>
<div class="t" style="left:588.30px;width:400px;text-align:center;top:632.39px;font-size:6.5px;font-weight:400;color:#323130;">20%</div>
<div class="t" style="left:624.95px;width:400px;text-align:center;top:632.39px;font-size:6.5px;font-weight:400;color:#323130;">30%</div>
<div class="t" style="left:661.60px;width:400px;text-align:center;top:632.39px;font-size:6.5px;font-weight:400;color:#323130;">40%</div>
<div class="t" style="left:698.25px;width:400px;text-align:center;top:632.39px;font-size:6.5px;font-weight:400;color:#323130;">50%</div>
<svg class="b" style="left:971px;top:71px" width="18" height="16" viewBox="0 0 18 16" fill="none"><defs><linearGradient id="cg1" x1="0.2" y1="0" x2="0" y2="1"><stop offset="0" stop-color="#1a9cea"/><stop offset="0.6" stop-color="#16aad0"/><stop offset="1" stop-color="#14c890"/></linearGradient><linearGradient id="cg2" x1="0" y1="1" x2="1" y2="0"><stop offset="0" stop-color="#0b2fc8"/><stop offset="0.35" stop-color="#1a7fee"/><stop offset="1" stop-color="#2a8ff2"/></linearGradient></defs><path d="M5.2 1h4.6c1.6 0 2.2 1 1.8 2.4L9.3 10.6c-.4 1.4-1.4 2-2.8 2H2.8C1.2 12.6.6 11.6 1 10.2l1.9-6.8C3.3 2 4 1 5.2 1z" fill="url(#cg1)"/><path d="M11.6 3.4h3.7c1.6 0 2.2 1 1.8 2.4l-1.9 6.8c-.4 1.4-1.2 2.4-2.4 2.4H8.2c-1.6 0-2.2-1-1.8-2.4L8.7 5.4c.4-1.4 1.4-2 2.9-2z" fill="url(#cg2)"/><path d="M9.3 4.5L7.3 11" stroke="#fff" stroke-width="0.9" stroke-linecap="round"/></svg>
<div class="t" style="left:991.60px;top:71.71px;font-size:11.1px;font-weight:400;color:#201f1e;-webkit-text-stroke:0.33px #201f1e;">Copliot</div>
<div class="b" style="left:1032px;top:72.6px;width:31px;height:9px;background:#eeecec;border-radius:4.5px;"></div>
<div class="t" style="left:847.40px;width:400px;text-align:center;top:75.08px;font-size:5.6px;font-weight:400;color:#4a4948;-webkit-text-stroke:0.17px #4a4948;">PREVIEW</div>
<svg class="b" style="left:1111px;top:74px" width="12" height="6" viewBox="0 0 12 6" fill="none"><circle cx="2.5" cy="3" r="0.9" fill="#323130"/><circle cx="6" cy="3" r="0.9" fill="#323130"/><circle cx="9.5" cy="3" r="0.9" fill="#323130"/></svg>
<svg class="b" style="left:1134px;top:72px" width="11" height="11" viewBox="0 0 11 11" fill="none"><path d="M1.7 1.7l7.6 7.6M9.3 1.7L1.7 9.3" stroke="#323130" stroke-width="0.95"/></svg>
<svg class="b" style="left:1166px;top:64px" width="14" height="14" viewBox="0 0 14 14" fill="none"><path d="M7 1.2l5 2.9v5.8l-5 2.9-5-2.9V4.1z" stroke="#5a4fd0" stroke-width="0.9" stroke-linejoin="round"/><path d="M5.6 4.6v4.8L9.4 7z" stroke="#4d3fc8" stroke-width="0.9" stroke-linejoin="round"/><circle cx="6" cy="7" r="3.3" stroke="#6b8ef0" stroke-width="0.6"/></svg>
<div class="b" style="left:1180.2px;top:64px;width:2.2px;height:14.2px;background:#1a3fe8;border-radius:1px;"></div>
<div class="t" style="left:860.50px;width:400px;text-align:center;top:228.56px;font-size:7.3px;font-weight:400;color:#8a8886;">Customer : George Goldfisher</div>
<div class="b" style="left:971.3px;top:232px;width:36.4px;height:0.8px;background:#e4e2e2;"></div>
<div class="b" style="left:1112.6px;top:232px;width:36.4px;height:0.8px;background:#e4e2e2;"></div>
<div class="b" style="left:971.5px;top:247.6px;width:177.7px;height:285px;background:#fff;border-radius:4px;box-shadow:0 0.5px 2px rgba(0,0,0,0.12);"></div>
<div class="t" style="left:978.60px;top:257.24px;font-size:7.15px;font-weight:400;color:#616161;">February 16, 2023, 1:00pm</div>
<div class="t" style="left:978.60px;top:275.17px;font-size:8.76px;font-weight:400;color:#242424;">Here is some information about the</div>
<div class="t" style="left:978.60px;top:287.67px;font-size:8.76px;font-weight:400;color:#242424;">customer <span style="-webkit-text-stroke:0.3px #242424">George Goldfisher</span>:</div>
<div class="b" style="left:983.9px;top:315.50px;width:2px;height:2px;border-radius:50%;background:#242424"></div>
<div class="t" style="left:991.40px;top:312.53px;font-size:8.65px;font-weight:400;color:#242424;"><u style="color:#1e62b8;text-decoration-color:#6f9fe0;text-decoration-thickness:0.6px;text-underline-offset:1px">Four data sources</u> contributed to this</div>
<div class="t" style="left:991.40px;top:324.43px;font-size:8.65px;font-weight:400;color:#242424;">profile.</div>
<div class="b" style="left:983.9px;top:340.00px;width:2px;height:2px;border-radius:50%;background:#242424"></div>
<div class="t" style="left:991.40px;top:337.03px;font-size:8.65px;font-weight:400;color:#242424;">Five active segments: Average spend</div>
<div class="t" style="left:991.40px;top:349.23px;font-size:8.65px;font-weight:400;color:#242424;">high churn, Online shopper, PNW,</div>
<div class="t" style="left:991.40px;top:362.03px;font-size:8.65px;font-weight:400;color:#242424;">Price Sensitive, Seasonal products.</div>
<div class="b" style="left:983.9px;top:377.00px;width:2px;height:2px;border-radius:50%;background:#242424"></div>
<div class="t" style="left:991.40px;top:374.03px;font-size:8.65px;font-weight:400;color:#242424;">Last purchased a product in store on</div>
<div class="t" style="left:991.40px;top:385.93px;font-size:8.65px;font-weight:400;color:#242424;">2/1/23.</div>
<div class="b" style="left:983.9px;top:401.90px;width:2px;height:2px;border-radius:50%;background:#242424"></div>
<div class="t" style="left:991.40px;top:398.93px;font-size:8.65px;font-weight:400;color:#242424;">Most common activity types are</div>
<div class="t" style="left:991.40px;top:410.83px;font-size:8.65px;font-weight:400;color:#242424;">SalesOrder and Transactions.</div>
<div class="b" style="left:983.9px;top:426.60px;width:2px;height:2px;border-radius:50%;background:#242424"></div>
<div class="t" style="left:991.40px;top:423.63px;font-size:8.65px;font-weight:400;color:#242424;">2 SalesOrder and 3 transactions in last</div>
<div class="t" style="left:991.40px;top:435.93px;font-size:8.65px;font-weight:400;color:#242424;">60 days.</div>
<div class="b" style="left:978.6px;top:455.1px;width:55.4px;height:15.0px;background:#fff;border:0.8px solid #d8d8d8;border-radius:3px;"></div>
<svg class="b" style="left:984.5px;top:457.5px" width="11" height="10" viewBox="0 0 11 10" fill="none"><path d="M4 1.5l.9 2.3 2.3.9-2.3.9L4 7.9l-.9-2.3L.8 4.7l2.3-.9z" stroke="#424242" stroke-width="0.8" stroke-linejoin="round"/><path d="M8 6.3l.5 1.2 1.2.5-1.2.5L8 9.7l-.5-1.2-1.2-.5 1.2-.5z" fill="#424242"/></svg>
<div class="t" style="left:998.30px;top:458.53px;font-size:7.9px;font-weight:400;color:#242424;">Adjust</div>
<svg class="b" style="left:1022px;top:459.5px" width="8" height="6" viewBox="0 0 8 6" fill="none"><path d="M1.3 1.8L4 4.4l2.7-2.6" stroke="#424242" stroke-width="0.8"/></svg>
<div class="b" style="left:1039.4px;top:455.1px;width:41.5px;height:15.0px;background:#fff;border:0.8px solid #d8d8d8;border-radius:3px;"></div>
<svg class="b" style="left:1045px;top:456.5px" width="10" height="12" viewBox="0 0 10 12" fill="none"><rect x="3" y="1" width="5.8" height="8.4" rx="1" stroke="#424242" stroke-width="0.8"/><path d="M1.5 3.2v6.3c0 .8.6 1.4 1.4 1.4h4.4" stroke="#424242" stroke-width="0.8"/></svg>
<div class="t" style="left:1058.70px;top:458.86px;font-size:7.3px;font-weight:400;color:#242424;">Copy</div>
<div class="t" style="left:978.60px;top:483.60px;font-size:6.3px;font-weight:400;color:#6a6a6a;">AI-generated content may be incorrect</div>
<svg class="b" style="left:1111.3px;top:480.6px" width="10" height="10.5" viewBox="0 0 10 10.5" fill="none"><path d="M4.3 1C5 1 5.3 1.6 5.2 2.5L4.9 4.3H7.6C8.4 4.3 8.9 5 8.7 5.8L8 8.6C7.8 9.3 7.2 9.6 6.5 9.6H3C1.8 9.6 1 8.7 1 7.6V6.6C1 5.6 1.6 5 2.4 4.7C3.2 4.3 3.6 3.5 3.7 2.6L3.8 1.5C3.9 1.2 4 1 4.3 1Z" stroke="#323130" stroke-width="0.85" stroke-linejoin="round"/></svg>
<svg class="b" style="left:1129.5px;top:480.8px" width="10" height="10.5" viewBox="0 0 10 10.5" fill="none"><g transform="translate(0 10.5) scale(1 -1)"><path d="M4.3 1C5 1 5.3 1.6 5.2 2.5L4.9 4.3H7.6C8.4 4.3 8.9 5 8.7 5.8L8 8.6C7.8 9.3 7.2 9.6 6.5 9.6H3C1.8 9.6 1 8.7 1 7.6V6.6C1 5.6 1.6 5 2.4 4.7C3.2 4.3 3.6 3.5 3.7 2.6L3.8 1.5C3.9 1.2 4 1 4.3 1Z" stroke="#323130" stroke-width="0.85" stroke-linejoin="round"/></g></svg>
<div class="t" style="left:979.00px;top:499.86px;font-size:6.0px;font-weight:400;color:#707070;">3 references</div>
<svg class="b" style="left:1015.2px;top:498.8px" width="8" height="6" viewBox="0 0 8 6" fill="none"><path d="M1.3 4.4L4 1.8l2.7 2.6" stroke="#424242" stroke-width="0.8"/></svg>
<svg class="b" style="left:1019px;top:504.5px" width="9.5" height="12" viewBox="0 0 10 13.5" fill="none"><path d="M3.5 0.8C4.2 0.8 4.6 1.2 4.6 1.9V6.2C4.9 5.9 5.6 5.9 5.9 6.3C6.2 5.9 7 5.9 7.3 6.4C7.6 6.1 8.4 6.1 8.6 6.7L8.9 7.2C9.1 7.7 9.2 8.3 9.2 8.9V10.6C9.2 11.9 8.3 12.9 7 12.9H4.6C3.9 12.9 3.3 12.5 2.9 11.9L0.9 8.8C0.6 8.3 0.8 7.7 1.3 7.5C1.7 7.3 2.2 7.5 2.4 7.9V1.9C2.4 1.2 2.8 0.8 3.5 0.8Z" fill="#fff" stroke="#1a1a1a" stroke-width="0.9" stroke-linejoin="round"/><path d="M5.9 6.4V8.4M7.3 6.5V8.4" stroke="#1a1a1a" stroke-width="0.7"/></svg>
<div class="b" style="left:979px;top:513.5px;width:47px;height:11.6px;background:#e6ecfa;border-radius:2px;"></div>
<div class="t" style="left:981.50px;top:515.89px;font-size:7.05px;font-weight:400;color:#1c4fb8;">Data sources</div>
<div class="b" style="left:1029px;top:513.5px;width:37px;height:11.6px;background:#e6ecfa;border-radius:2px;"></div>
<div class="t" style="left:1031.30px;top:516.65px;font-size:6.95px;font-weight:400;color:#1c4fb8;">Segments</div>
<div class="b" style="left:1069.3px;top:513.5px;width:52px;height:11.6px;background:#e6ecfa;border-radius:2px;"></div>
<div class="t" style="left:1071.30px;top:515.68px;font-size:7.45px;font-weight:400;color:#1c4fb8;">UnifiedActivity</div>
<div class="b" style="left:962px;top:540px;width:197px;height:0.8px;background:#edebeb;"></div>
<div class="b" style="left:995.3px;top:548.4px;width:153.9000000000001px;height:14.2px;background:#fff;border:0.9px solid #b5cdf2;border-radius:3px;"></div>
<div class="t" style="left:999.80px;top:552.03px;font-size:7.35px;font-weight:400;color:#242424;">What were the last 3 customer transactions?</div>
<div class="b" style="left:996.3px;top:568px;width:152.9000000000001px;height:14.2px;background:#fff;border:0.9px solid #b5cdf2;border-radius:3px;"></div>
<div class="t" style="left:1000.90px;top:571.67px;font-size:7.27px;font-weight:400;color:#242424;">How many customers are in PNW segment?</div>
<div class="b" style="left:1019px;top:587.9px;width:110.59999999999991px;height:14.2px;background:#fff;border:0.9px solid #b5cdf2;border-radius:3px;"></div>
<div class="t" style="left:1023.60px;top:591.50px;font-size:7.4px;font-weight:400;color:#242424;">Find more about this customer</div>
<div class="b" style="left:1134.3px;top:587.9px;width:14.9px;height:14.4px;background:#fff;border:0.9px solid #b5cdf2;border-radius:3px;"></div>
<svg class="b" style="left:1136.5px;top:590px" width="10" height="10" viewBox="0 0 10 10" fill="none"><path d="M8.2 5A3.2 3.2 0 1 1 7.2 2.6" stroke="#242424" stroke-width="0.9"/><path d="M7.8 1v2.2H5.6" stroke="#242424" stroke-width="0.9"/></svg>
<div class="b" style="left:971px;top:610.2px;width:178.2px;height:49.6px;background:#fff;border:0.8px solid #e0e0e0;border-radius:3px;"></div>
<div class="t" style="left:978.80px;top:620.28px;font-size:8.55px;font-weight:400;color:#707070;">Ask a question about your customer here...</div>
<svg class="b" style="left:983px;top:636px" width="12" height="12" viewBox="0 0 12 12" fill="none"><path d="M5 1.5l1 2.6 2.6 1L6 6l-1 2.6L4 6 1.4 5 4 4.1z" stroke="#424242" stroke-width="0.85" stroke-linejoin="round"/><path d="M9 7.8l.5 1.3 1.3.5-1.3.5L9 11.4l-.5-1.3-1.3-.5 1.3-.5z" fill="#424242"/></svg>
<svg class="b" style="left:1003px;top:636px" width="12" height="12" viewBox="0 0 12 12" fill="none"><path d="M9.5 5.5L5.3 9.7c-.9.9-2.1.9-2.9.1-.8-.8-.8-2 .1-2.9l4.6-4.6c.6-.6 1.4-.6 1.9-.1.5.5.5 1.3-.1 1.9L4.7 8.3c-.3.3-.7.3-.9.1-.2-.2-.2-.6.1-.9L7.7 3.7" stroke="#424242" stroke-width="0.85"/></svg>
<svg class="b" style="left:1125.5px;top:636px" width="12" height="12" viewBox="0 0 12 12" fill="none"><path d="M1.5 1.5l9.5 4.5-9.5 4.5 1.6-4.5zM3.1 6h7.9" stroke="#424242" stroke-width="0.9" stroke-linejoin="round"/></svg>
</body></html>
